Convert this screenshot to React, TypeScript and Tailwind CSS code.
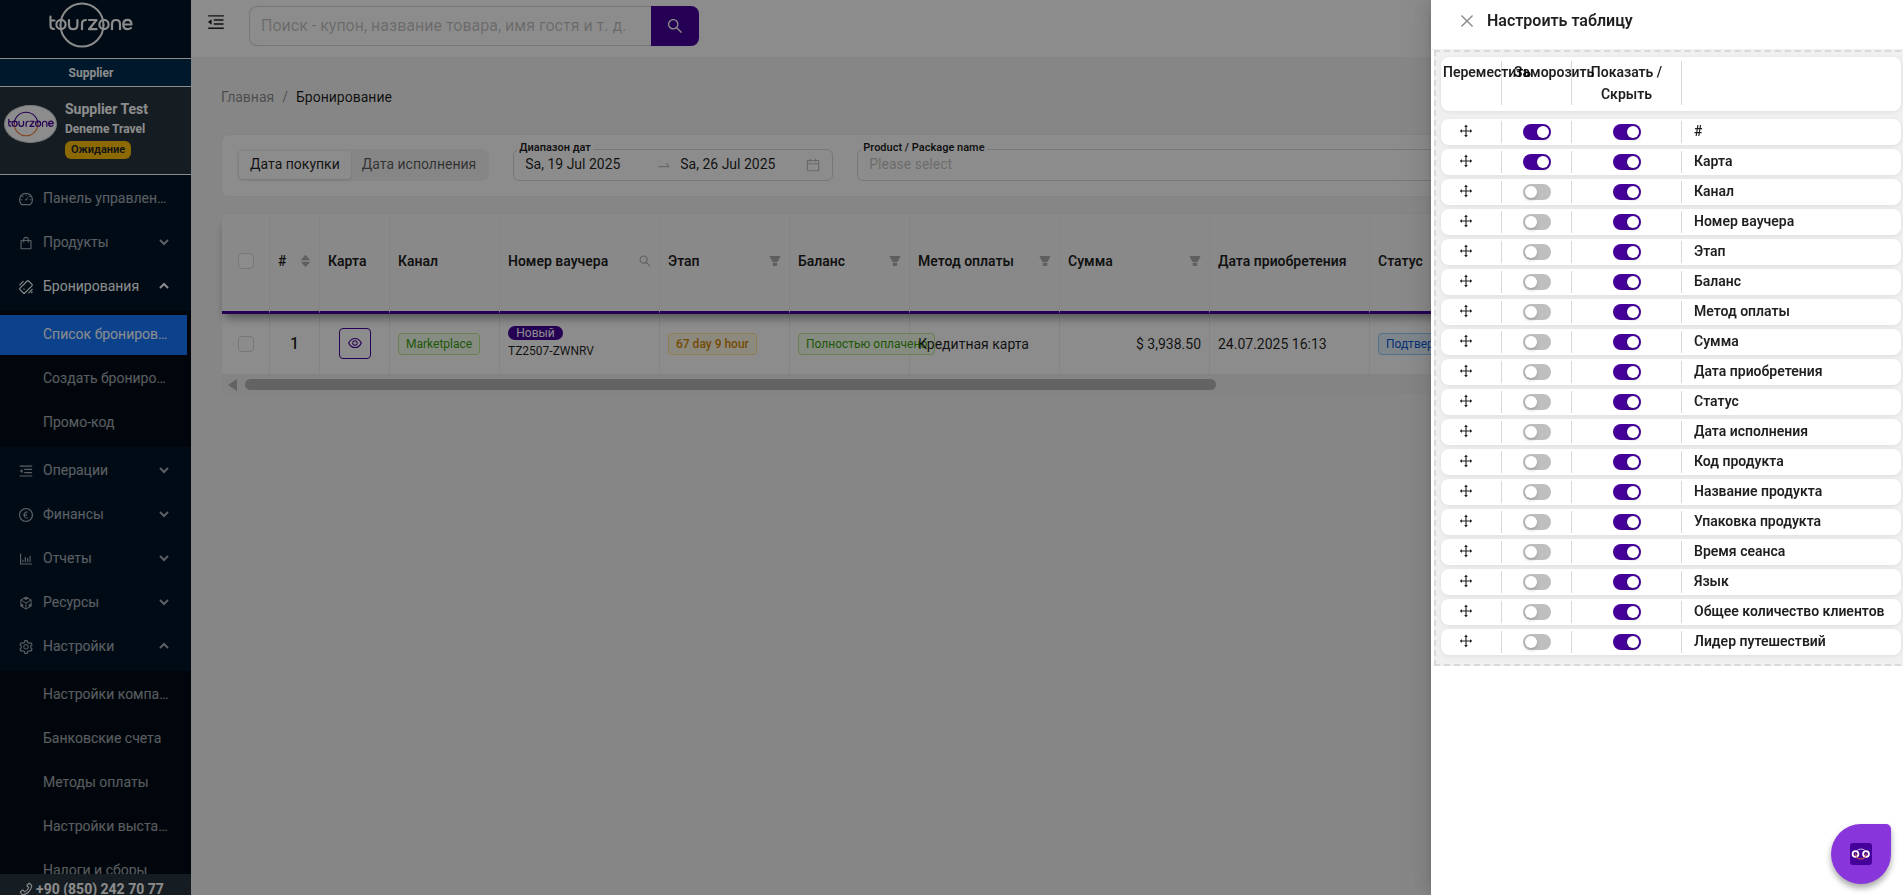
import type { ReactNode } from "react";
import {
  AiOutlineDashboard,
  AiOutlineShopping,
  AiOutlineMenuFold,
  AiOutlineEuroCircle,
  AiOutlineBarChart,
  AiOutlineCodeSandbox,
  AiOutlineSetting,
  AiOutlinePhone,
  AiOutlineSearch,
  AiFillFilter,
  AiFillCaretUp,
  AiFillCaretDown,
  AiOutlineEye,
  AiOutlineCalendar,
  AiOutlineSwapRight,
  AiOutlineClose,
  AiOutlineDrag,
} from "react-icons/ai";

function TicketIcon() {
  return (
    <svg width="16" height="16" viewBox="-1 -1 16 16" fill="none" stroke="currentColor" strokeWidth="1.1" strokeLinejoin="round" strokeLinecap="round">
      <path d="M8.2 1 1 8.200q-.7.700 0 1.400L4.400 13q.7.700 1.400 0L13 5.800q.7-.700 0-1.400L9.600 1q-.7-.700-1.400 0Z" />
      <path d="M.8 4.800 4.200 1.400M9.800 12.800l3.400-3.400M12.400 12.600l.8-.800M4.800 8.800l.4.400" />
    </svg>
  );
}

function Wordmark({ className, ring, lower, text }: { className: string; ring: string; lower: string; text: string }) {
  return (
    <svg className={className} viewBox="0 0 84 46" fill="none" strokeLinecap="round" role="img" aria-label="tourzone">
      <path d="M11.500 23a21.500 21.500 0 0 1 43 0" stroke={ring} strokeWidth="2" />
      <path d="M11.500 23a21.500 21.500 0 0 0 43 0" stroke={lower} strokeWidth="2" />
      <g stroke={text} strokeWidth="2.2" strokeLinejoin="round">
        <path d="M1.500 14.500v9q0 3.500 3.500 3.500M1.500 18.500h4" />
        <circle cx="12" cy="22.500" r="4.600" />
        <path d="M20 18v5q0 4.200 4.200 4.200t4.200-4.200v-5" />
        <path d="M33 27.200v-5.200q0-4 4-4" />
        <path d="M40 18h7.500L40 27.200h7.500" />
        <circle cx="55" cy="22.500" r="4.600" />
        <path d="M63 27.200v-5q0-4.200 4-4.200t4 4.200v5" />
        <path d="M74.500 22.500h8q0-4.700-4.100-4.700t-4.100 4.700 4.100 4.700q2.200 0 3.500-1.200" />
      </g>
    </svg>
  );
}

function Chevron({ up }: { up?: boolean }) {
  return (
    <svg width="10" height="8" viewBox="0 0 10 8" fill="none" stroke="currentColor" strokeWidth="2">
      {up ? <path d="m1 6 4-4 4 4" /> : <path d="m1 2 4 4 4-4" />}
    </svg>
  );
}

function MenuItem({ icon, label, open, arrow, active }: { icon: ReactNode; label: string; open?: boolean; arrow?: boolean; active?: boolean }) {
  return (
    <button
      type="button"
      aria-expanded={arrow ? !!open : undefined}
      className={`mb-1 flex h-10 w-full items-center pr-[22px] pb-[2px] pl-[18px] text-left ${active ? "text-white" : "text-white/65"}`}
    >
      <span className="flex w-[25px] shrink-0 pt-[2px] text-[16px]">{icon}</span>
      <span className="min-w-0 flex-1 truncate">{label}</span>
      {arrow && <Chevron up={open} />}
    </button>
  );
}

function SubMenu({ items, selected }: { items: string[]; selected?: number }) {
  return (
    <div className="mb-1 bg-[#000c17] pt-1 pb-px">
      {items.map((t, i) => (
        <a
          key={t}
          href="#"
          className={`mr-1 mb-1 block h-10 truncate pr-[18px] pl-[43px] leading-[38px] last:mb-[3px] ${i === selected ? "bg-[#1677ff] text-white" : "text-white/65"}`}
        >
          {t}
        </a>
      ))}
    </div>
  );
}

function Sidebar() {
  return (
    <aside className="flex h-full w-[191px] shrink-0 flex-col bg-[#001529]">
      <div className="flex h-[58px] shrink-0 justify-center pt-[2px] pr-[9px]">
        <Wordmark className="h-[46px] w-[84px]" ring="#fff" lower="#fff" text="#fff" />
      </div>
      <div className="flex h-[29px] shrink-0 items-center justify-center border-y border-white bg-[#002c50] pr-[9px] text-[12px] font-bold text-white">
        Supplier
      </div>
      <div className="flex h-[88px] shrink-0 items-center border-b border-white bg-[#28363f] pb-1 pl-1 text-white">
        <div className="mt-[-10px] flex h-[38px] w-[53px] shrink-0 items-center justify-center rounded-[50%] border border-[#d9d9d9] bg-white">
          <Wordmark className="h-[26px] w-[46px]" ring="#440099" lower="#f47b30" text="#440099" />
        </div>
        <div className="ml-2 flex flex-col items-start pb-px font-bold">
          <span className="text-[14px] leading-[22px]">Supplier Test</span>
          <span className="text-[12px] leading-[18px]">Deneme Travel</span>
          <span className="mt-[3px] rounded-md bg-[#ffc107] px-[6px] text-[11px] leading-[18px] font-semibold text-[#212529]">Ожидание</span>
        </div>
      </div>
      <nav className="min-h-0 flex-1 overflow-hidden pt-1">
        <MenuItem icon={<AiOutlineDashboard />} label="Панель управления" />
        <MenuItem icon={<AiOutlineShopping />} label="Продукты" arrow />
        <MenuItem icon={<TicketIcon />} label="Бронирования" arrow open active />
        <SubMenu items={["Список бронирований", "Создать бронирование", "Промо-код"]} selected={0} />
        <MenuItem icon={<AiOutlineMenuFold />} label="Операции" arrow />
        <MenuItem icon={<AiOutlineEuroCircle />} label="Финансы" arrow />
        <MenuItem icon={<AiOutlineBarChart />} label="Отчеты" arrow />
        <MenuItem icon={<AiOutlineCodeSandbox />} label="Ресурсы" arrow />
        <MenuItem icon={<AiOutlineSetting />} label="Настройки" arrow open />
        <SubMenu items={["Настройки компании", "Банковские счета", "Методы оплаты", "Настройки выставления", "Налоги и сборы"]} />
      </nav>
      <footer className="flex h-[21px] shrink-0 items-start overflow-hidden bg-[#28363f] pt-1 pl-[18px] leading-[22px] font-bold text-white">
        <AiOutlinePhone className="mt-[3px] mr-[2px] text-[16px]" />
        +90 (850) 242 70 77
      </footer>
    </aside>
  );
}

function FieldBox({ label, id, children, className }: { label: string; id: string; children: ReactNode; className: string }) {
  return (
    <div className={`relative flex h-8 items-center rounded-md border border-[#d9d9d9] bg-white pb-[2px] ${className}`}>
      <label htmlFor={id} className="absolute -top-[9px] left-[3px] bg-white px-[2px] text-[11px] leading-[14px] font-semibold whitespace-nowrap">
        {label}
      </label>
      {children}
    </div>
  );
}

function FilterBar() {
  return (
    <section className="mt-[26px] flex h-[63px] items-center rounded-lg border border-[#f0f0f0] bg-white px-[15px] pb-px">
      <div className="flex h-8 shrink-0 items-center rounded-md bg-[#f5f5f5] p-[2px]">
        <button type="button" className="h-7 rounded-[4px] bg-white px-[11px] pb-[2px] shadow-[0_1px_3px_rgba(0,0,0,.12)]">Дата покупки</button>
        <button type="button" className="h-7 px-[11px] pb-[2px] text-black/65">Дата исполнения</button>
      </div>
      <FieldBox label="Диапазон дат" id="from" className="ml-6 w-80 shrink-0 px-[11px]">
        <input id="from" defaultValue="Sa, 19 Jul 2025" className="w-[123px] outline-none" />
        <AiOutlineSwapRight className="mx-2 mt-[2px] shrink-0 text-[16px] text-black/25" />
        <input aria-label="Конец диапазона" defaultValue="Sa, 26 Jul 2025" className="w-[123px] outline-none" />
        <AiOutlineCalendar className="mt-[2px] ml-auto shrink-0 text-[16px] text-black/25" />
      </FieldBox>
      <FieldBox label="Product / Package name" id="product" className="ml-6 flex-1 px-[11px]">
        <input id="product" placeholder="Please select" className="w-full outline-none placeholder:text-black/25" />
      </FieldBox>
    </section>
  );
}

const columns: { title: string; icon?: "filter" | "search" | "sort"; width: string }[] = [
  { title: "#", icon: "sort", width: "w-[50px]" },
  { title: "Карта", width: "w-[70px]" },
  { title: "Канал", width: "w-[110px]" },
  { title: "Номер ваучера", icon: "search", width: "w-[160px]" },
  { title: "Этап", icon: "filter", width: "w-[130px]" },
  { title: "Баланс", icon: "filter", width: "w-[120px]" },
  { title: "Метод оплаты", icon: "filter", width: "w-[150px]" },
  { title: "Сумма", icon: "filter", width: "w-[150px]" },
  { title: "Дата приобретения", width: "w-[160px]" },
  { title: "Статус", icon: "filter", width: "w-[130px]" },
  { title: "Дата исполнения", width: "w-[370px]" },
];

function Tag({ className, children }: { className: string; children: ReactNode }) {
  return <span className={`inline-block h-[22px] rounded-[4px] border px-[7px] text-[12px] leading-5 whitespace-nowrap ${className}`}>{children}</span>;
}

function CheckBox({ label }: { label: string }) {
  return <input type="checkbox" aria-label={label} className="mx-auto block size-4 appearance-none rounded-[4px] border border-[#d9d9d9] bg-white" />;
}

function BookingTable() {
  const cell = "border-r border-[#f0f0f0] px-2 pb-px";
  const head = "border-t border-r border-b-[3px] border-[#f0f0f0] border-b-[#440099] bg-[#fafafa] pb-1";
  return (
    <section className="mt-4 pl-px">
      <table className="w-[1648px] table-fixed border-separate border-spacing-0">
        <thead className="relative z-10 rounded-tl-lg shadow-[0_7px_10px_-3px_rgba(0,0,0,.4)]">
          <tr className="h-[101px]">
            <th className={`w-12 rounded-tl-lg ${head}`}>
              <CheckBox label="Выбрать все" />
            </th>
            {columns.map((c) => (
              <th key={c.title} className={`${c.width} ${head} px-2 text-left font-semibold`}>
                <span className="flex items-center justify-between whitespace-nowrap">
                  {c.title}
                  {c.icon === "filter" && <AiFillFilter className="-mr-px text-[14px] text-black/30" />}
                  {c.icon === "search" && <AiOutlineSearch className="-mr-px text-[14px] text-black/30" />}
                  {c.icon === "sort" && (
                    <span className="-mr-px flex flex-col text-[13px] text-black/30">
                      <AiFillCaretUp className="-mb-[3px]" />
                      <AiFillCaretDown className="-mt-[3px]" />
                    </span>
                  )}
                </span>
              </th>
            ))}
          </tr>
        </thead>
        <tbody className="bg-white">
          <tr className="h-[60px]">
            <td className="border-r border-[#f0f0f0]">
              <CheckBox label="Выбрать строку 1" />
            </td>
            <td className={`${cell} text-center text-[16px] font-medium`}>1</td>
            <td className={cell}>
              <button type="button" aria-label="Просмотр" className="mx-auto flex h-[31px] w-8 items-center justify-center rounded-[4px] border border-[#440099] pb-[2px] text-[16px] text-[#440099]">
                <AiOutlineEye />
              </button>
            </td>
            <td className={cell}>
              <Tag className="border-[#b7eb8f] bg-[#f6ffed] text-[#389e0d]">Marketplace</Tag>
            </td>
            <td className={`${cell} text-[12px]`}>
              <span className="block w-[55px] rounded-full bg-[#440099] text-center leading-[14px] text-white">Новый</span>
              <span className="block leading-[22px]">TZ2507-ZWNRV</span>
            </td>
            <td className={cell}>
              <Tag className="border-[#ffe58f] bg-[#fffbe6] font-medium text-[#d48806]">67 day 9 hour</Tag>
            </td>
            <td className={cell}>
              <Tag className="border-[#b7eb8f] bg-[#f6ffed] text-[#389e0d]">Полностью оплачено</Tag>
            </td>
            <td className={`${cell} whitespace-nowrap`}>
              <span className="relative">Кредитная карта</span>
            </td>
            <td className={`${cell} text-right`}>$ 3,938.50</td>
            <td className={cell}>24.07.2025 16:13</td>
            <td className={cell}>
              <Tag className="border-[#91caff] bg-[#e6f4ff] text-[#0958d9]">Подтверждено</Tag>
            </td>
            <td className={cell}>26.07.2025</td>
          </tr>
        </tbody>
      </table>
      <div className="flex h-5 w-[1648px] items-center bg-[#f1f1f1] pt-px pl-[6px]">
        <svg width="9" height="12" viewBox="0 0 9 12" fill="#b4b4b4">
          <path d="M9 0v12L0 6Z" />
        </svg>
        <div className="ml-2 h-[11px] w-[971px] rounded-full bg-[#b4b4b4]" />
      </div>
    </section>
  );
}

const settings = [
  "#",
  "Карта",
  "Канал",
  "Номер ваучера",
  "Этап",
  "Баланс",
  "Метод оплаты",
  "Сумма",
  "Дата приобретения",
  "Статус",
  "Дата исполнения",
  "Код продукта",
  "Название продукта",
  "Упаковка продукта",
  "Время сеанса",
  "Язык",
  "Общее количество клиентов",
  "Лидер путешествий",
];

function Toggle({ label, on }: { label: string; on: boolean }) {
  return (
    <input
      type="checkbox"
      role="switch"
      aria-label={label}
      defaultChecked={on}
      className="block h-4 w-7 appearance-none rounded-full bg-[#bfbfbf] before:m-[2px] before:block before:size-3 before:rounded-full before:bg-white before:shadow-[0_2px_4px_rgba(0,35,11,.2)] checked:bg-[#440099] checked:before:ml-[14px]"
    />
  );
}

function Drawer() {
  const row = "grid grid-cols-[61px_70px_110px_1fr] rounded-lg bg-white shadow-[0_1px_4px_rgba(0,0,0,.08)]";
  return (
    <aside className="flex h-full w-[472px] flex-col overflow-hidden bg-white shadow-[-6px_0_16px_rgba(0,0,0,.08),-3px_0_6px_-4px_rgba(0,0,0,.12),-9px_0_28px_8px_rgba(0,0,0,.05)]">
      <header className="flex h-[50px] shrink-0 items-center border-b border-[#f0f0f0] pb-2 pl-[27px]">
        <button type="button" aria-label="Закрыть" className="text-[18px] text-black/45">
          <AiOutlineClose />
        </button>
        <h2 className="ml-[11px] text-[16px] leading-6 font-semibold">Настроить таблицу</h2>
      </header>
      <div className="-mr-2 ml-[3px] border-2 border-dashed border-[#d9d9d9] bg-[#f0f0f0] pt-[5px] pr-2 pb-[9px] pl-[5px] font-semibold">
        <div className={`${row} mb-2 pt-1 pb-[6px] text-center leading-[22px]`}>
          <div className="h-11 border-r border-[#d9d9d9] pr-3 pl-[2px]">Переместить</div>
          <div className="border-r border-[#d9d9d9] px-3">Заморозить</div>
          <div className="border-r border-[#d9d9d9] px-3">Показать / Скрыть</div>
          <div />
        </div>
        <ul className="flex flex-col gap-1">
          {settings.map((s, i) => (
            <li key={s} className={`${row} py-[2px] leading-5`}>
              <div className="flex h-[22px] items-center justify-center border-r border-[#d9d9d9] pr-3 pb-[2px] pl-[2px]">
                <AiOutlineDrag className="text-[16px]" />
              </div>
              <div className="flex items-center justify-center border-r border-[#d9d9d9]">
                <Toggle label={`Заморозить: ${s}`} on={i < 2} />
              </div>
              <div className="flex items-center justify-center border-r border-[#d9d9d9]">
                <Toggle label={`Показать: ${s}`} on />
              </div>
              <div className="pl-3">{s}</div>
            </li>
          ))}
        </ul>
      </div>
    </aside>
  );
}

export default function App() {
  return (
    <div className="relative flex h-screen overflow-hidden bg-[#f5f5f5] font-[Roboto,sans-serif] text-[14px] leading-[22px] text-black/88">
      <Sidebar />
      <div className="flex min-w-0 flex-1 flex-col overflow-hidden">
        <header className="flex h-[57px] shrink-0 bg-white pt-[6px] pl-[15px]">
          <button type="button" aria-label="Свернуть меню" className="mt-[6px] h-5 text-[20px]">
            <AiOutlineMenuFold />
          </button>
          <div className="ml-[23px] flex h-10">
            <input
              type="search"
              aria-label="Поиск"
              placeholder="Поиск - купон, название товара, имя гостя и т. д."
              className="w-[402px] rounded-l-lg border border-r-0 border-[#d9d9d9] px-[11px] text-[16px] outline-none placeholder:text-black/25"
            />
            <button type="button" aria-label="Найти" className="flex w-12 items-center justify-center rounded-r-lg bg-[#440099] text-[18px] text-white">
              <AiOutlineSearch />
            </button>
          </div>
        </header>
        <main className="px-[30px] pt-[29px]">
          <nav className="flex">
            <a href="#" className="text-black/45">Главная</a>
            <span className="mx-2 text-black/45">/</span>
            <span>Бронирование</span>
          </nav>
          <FilterBar />
          <BookingTable />
        </main>
      </div>
      <div className="fixed inset-0 z-20 flex justify-end bg-black/45">
        <Drawer />
      </div>
      <button
        type="button"
        aria-label="Чат"
        className="fixed right-3 bottom-[11px] z-30 flex size-[60px] items-center justify-center rounded-[30px] rounded-tr-[5px] bg-[#8836dc] shadow-[0_4px_6px_rgba(0,0,0,.35)]"
      >
        <svg width="22" height="22" viewBox="0 0 22 22" fill="none">
          <rect width="22" height="22" rx="3" fill="#440099" />
          <circle cx="5.500" cy="11" r="2.900" stroke="#fff" strokeWidth="1.800" />
          <circle cx="16" cy="11" r="2.900" stroke="#fff" strokeWidth="1.800" />
          <path d="M6 8.200q5-4.400 10 0" stroke="#cbb8ea" />
          <path d="M5.500 10.500q.3 5.500 5.300 5.500t5.300-5.500" stroke="#e8663a" />
        </svg>
      </button>
    </div>
  );
}
